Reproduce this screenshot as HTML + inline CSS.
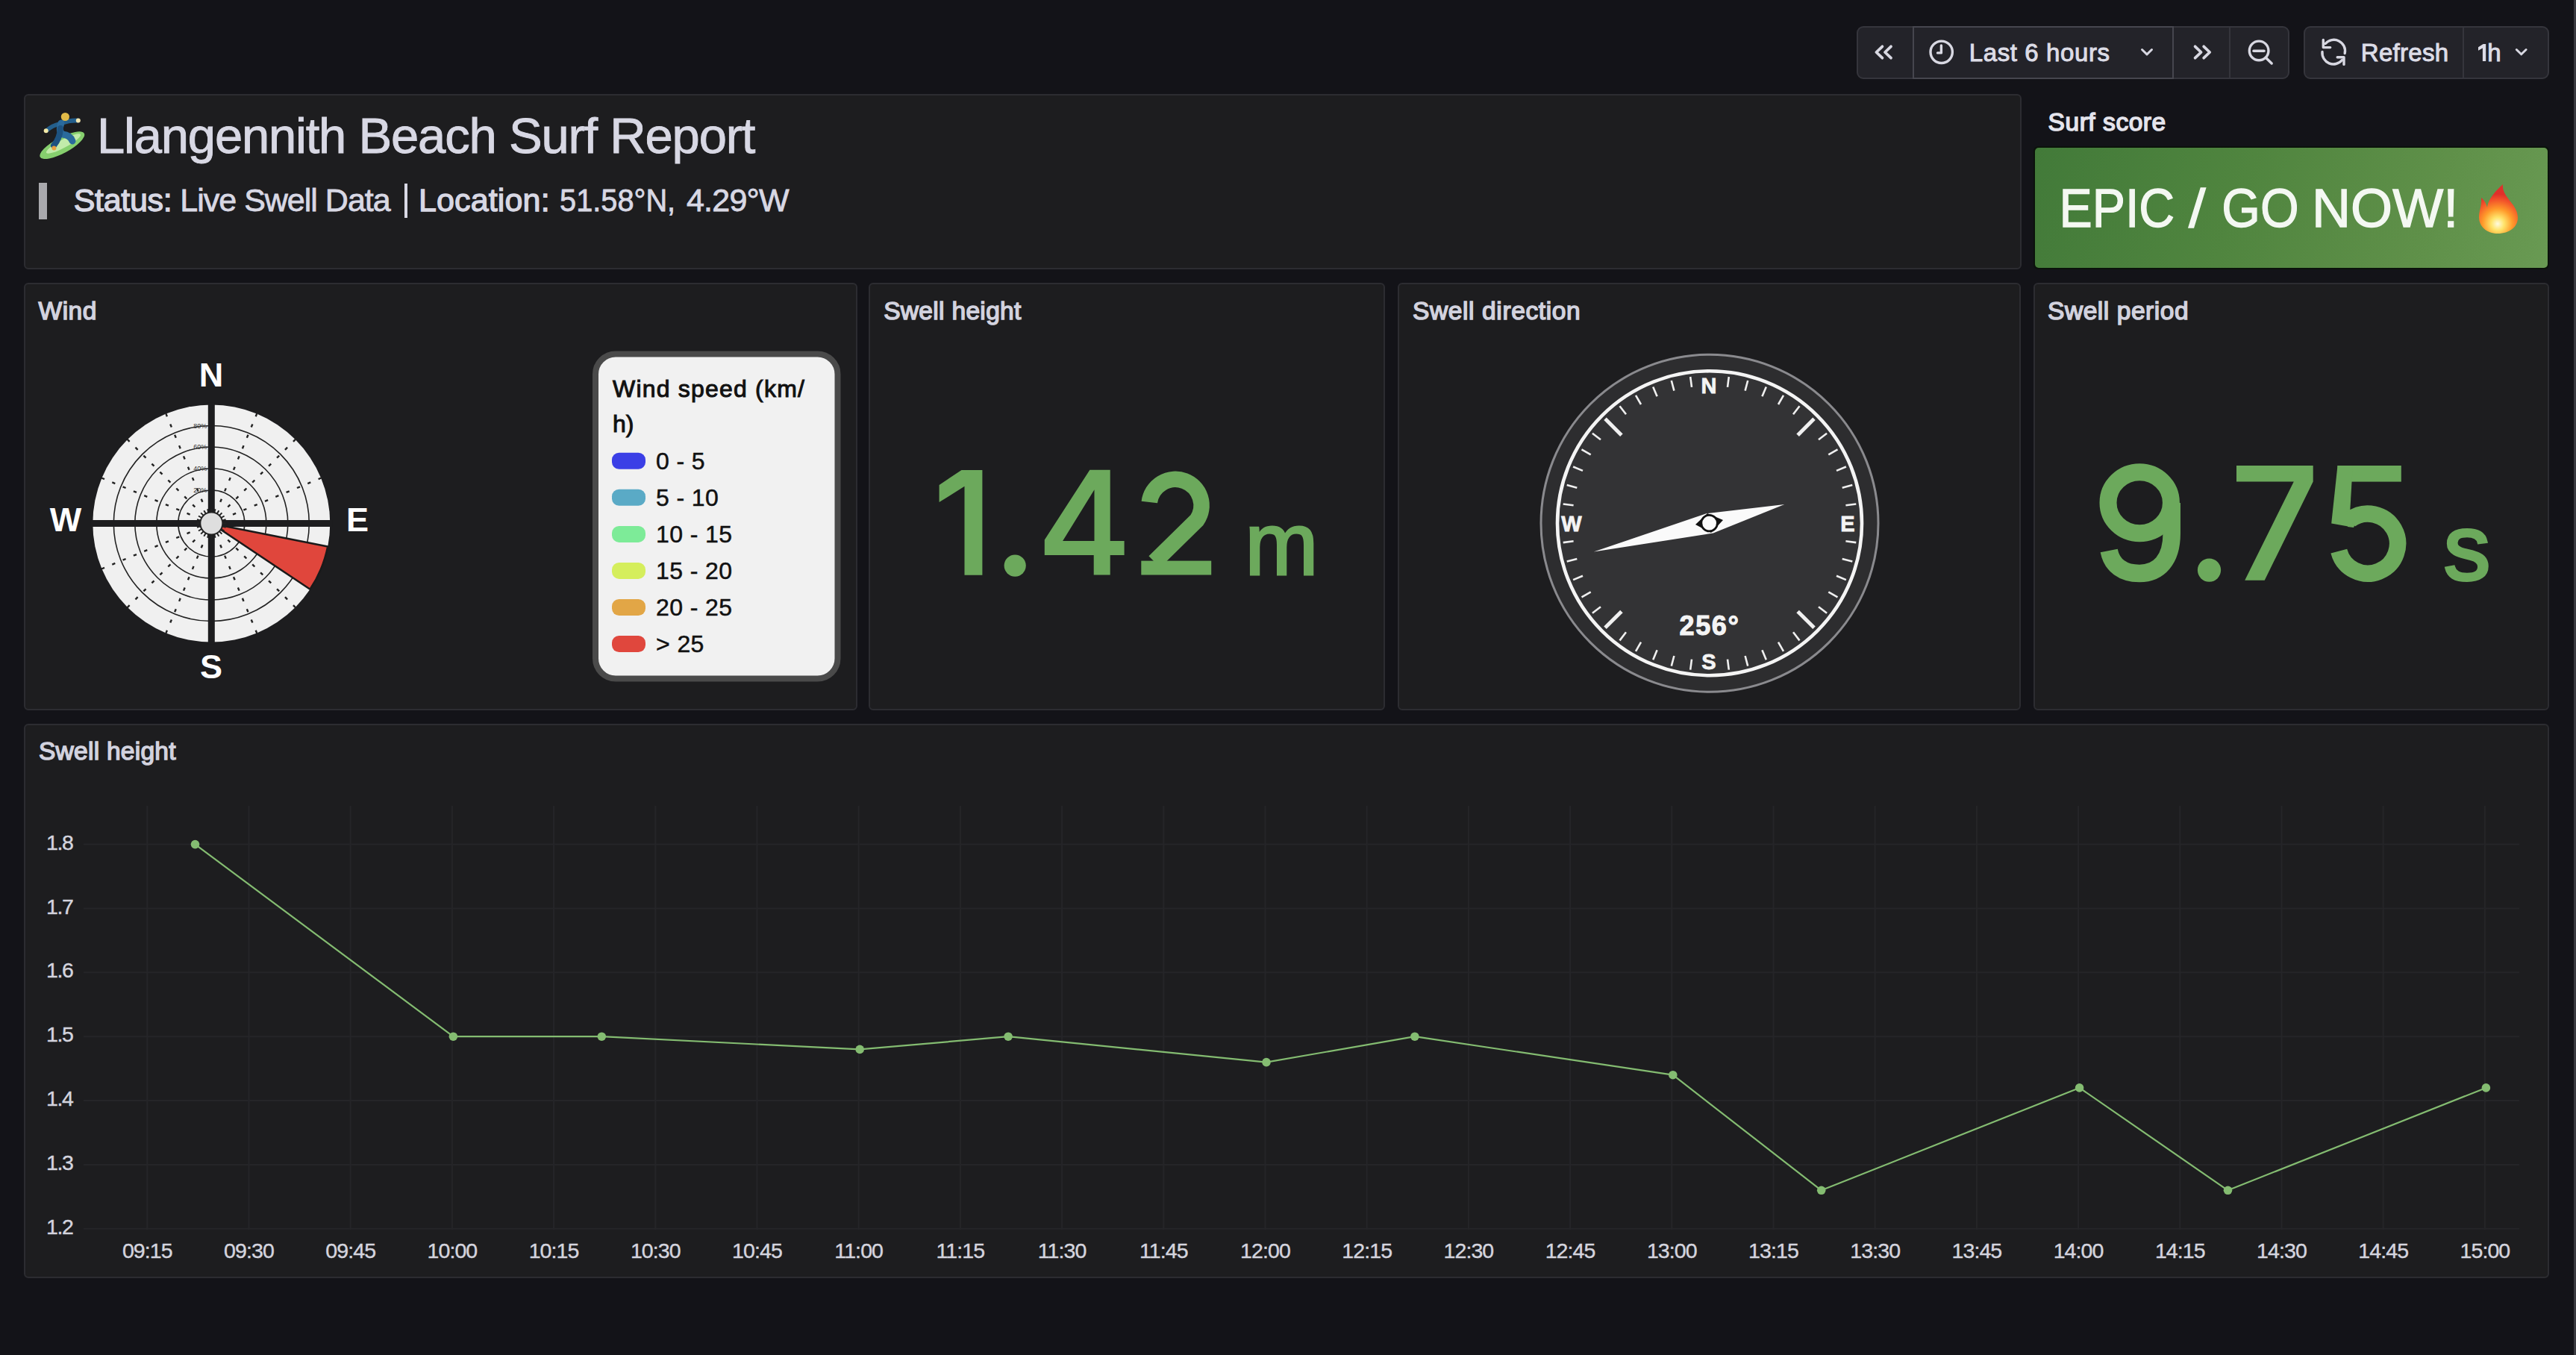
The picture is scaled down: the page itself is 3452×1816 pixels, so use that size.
<!DOCTYPE html>
<html><head><meta charset="utf-8"><title>Llangennith Beach Surf Report</title>
<style>
html,body{margin:0;padding:0;}
body{width:3452px;height:1816px;background:#131318;position:relative;overflow:hidden;font-family:"Liberation Sans",sans-serif;}
.p{position:absolute;box-sizing:border-box;}
.t{position:absolute;white-space:nowrap;line-height:1;}
svg text{font-family:"Liberation Sans",sans-serif;}
</style></head><body>
<div class="p" style="left:2488px;top:35px;width:580px;height:71px;background:#232329;border:2px solid #35353c;border-radius:9px"></div>
<div class="p" style="left:2563px;top:35px;width:350px;height:71px;border:2px solid #46464e;border-radius:0"></div>
<div class="p" style="left:2987px;top:35px;width:2px;height:71px;background:#35353c"></div>
<div class="p" style="left:3087px;top:35px;width:329px;height:71px;background:#232329;border:2px solid #35353c;border-radius:9px"></div>
<div class="p" style="left:3300px;top:35px;width:2px;height:71px;background:#35353c"></div>
<svg class="p" style="left:2480px;top:30px" width="940" height="80" viewBox="2480 30 940 80"><polyline points="2522.4,62.3 2514.4,70 2522.4,77.7" fill="none" stroke="#d8d8e2" stroke-linecap="round" stroke-linejoin="round" stroke-width="3.8"/><polyline points="2534,62.3 2526,70 2534,77.7" fill="none" stroke="#d8d8e2" stroke-linecap="round" stroke-linejoin="round" stroke-width="3.8"/><circle cx="2601.7" cy="69.8" r="14.7" fill="none" stroke="#d8d8e2" stroke-linecap="round" stroke-linejoin="round" stroke-width="3.4"/><polyline points="2601.4,61 2601.4,70.9 2596.5,70.9" fill="none" stroke="#d8d8e2" stroke-linecap="round" stroke-linejoin="round" stroke-width="3.4"/><polyline points="2870.5,66.5 2877,72.8 2883.5,66.5" fill="none" stroke="#d8d8e2" stroke-linecap="round" stroke-linejoin="round" stroke-width="3"/><polyline points="2941.6,62.3 2949.6,70 2941.6,77.7" fill="none" stroke="#d8d8e2" stroke-linecap="round" stroke-linejoin="round" stroke-width="3.8"/><polyline points="2953.2,62.3 2961.2,70 2953.2,77.7" fill="none" stroke="#d8d8e2" stroke-linecap="round" stroke-linejoin="round" stroke-width="3.8"/><circle cx="3027.1" cy="67.9" r="12.8" fill="none" stroke="#d8d8e2" stroke-linecap="round" stroke-linejoin="round" stroke-width="3.4"/><line x1="3020" y1="68.2" x2="3034" y2="68.2" fill="none" stroke="#d8d8e2" stroke-linecap="round" stroke-linejoin="round" stroke-width="3.4"/><line x1="3037.3" y1="78.2" x2="3044.2" y2="85" fill="none" stroke="#d8d8e2" stroke-linecap="round" stroke-linejoin="round" stroke-width="3.4"/><path d="M3116.2,58.5 A15,15 0 0 1 3142.2,71.5" fill="none" stroke="#d8d8e2" stroke-linecap="round" stroke-linejoin="round" stroke-width="3.4"/><path d="M3112,69.5 A15,15 0 0 0 3138.5,80.5" fill="none" stroke="#d8d8e2" stroke-linecap="round" stroke-linejoin="round" stroke-width="3.4"/><polyline points="3113.3,53.5 3113.3,63.6 3122.7,63.6" fill="none" stroke="#d8d8e2" stroke-linecap="round" stroke-linejoin="round" stroke-width="3.4"/><polyline points="3132.2,76.8 3141,76.8 3141,86.4" fill="none" stroke="#d8d8e2" stroke-linecap="round" stroke-linejoin="round" stroke-width="3.4"/><polyline points="3372.3,66.5 3378.7,72.8 3385.1,66.5" fill="none" stroke="#d8d8e2" stroke-linecap="round" stroke-linejoin="round" stroke-width="3"/></svg>
<div class="t" style="left:2638.8px;top:53.8px;font-size:33px;color:#dcdce6;font-weight:normal;letter-spacing:0.60px;-webkit-text-stroke:1px #dcdce6">Last 6 hours</div>
<div class="t" style="left:3163.8px;top:53.6px;font-size:33px;color:#dcdce6;font-weight:normal;letter-spacing:0.30px;-webkit-text-stroke:1px #dcdce6">Refresh</div>
<svg class="p" style="left:3315px;top:55px" width="20" height="30" viewBox="3315 55 20 30"><polygon points="3321,63.2 3327.6,58.9 3331.2,58.9 3331.2,82 3326.9,82 3326.9,64.6 3321,67.8" fill="#dcdce6"/></svg>
<div class="t" style="left:3333.3px;top:54.1px;font-size:33px;color:#dcdce6;font-weight:normal;letter-spacing:0.00px;-webkit-text-stroke:1px #dcdce6">h</div>
<div class="p" style="left:3449px;top:0;width:3px;height:1816px;background:#3a3a40"></div>
<div class="p" style="left:32px;top:126px;width:2677px;height:235px;background:#1d1d1f;border:2px solid #2c2c31;border-radius:6px"></div>
<svg class="p" style="left:44px;top:138px" width="76" height="80" viewBox="44 138 76 80"><ellipse cx="83.3" cy="194.7" rx="33.5" ry="10.5" transform="rotate(-28.2 83.3 194.7)" fill="#86cf6e"/><ellipse cx="85" cy="192.5" rx="26" ry="5.5" transform="rotate(-28.2 85 192.5)" fill="#c2ebaa"/><path d="M82 165 Q94 161 103 161.5" fill="none" stroke="#245f8c" stroke-width="6" stroke-linecap="round"/><path d="M80 166 Q70 168 62.5 175" fill="none" stroke="#245f8c" stroke-width="5.5" stroke-linecap="round"/><path d="M82 165 Q78 176 84 180 Q94 181 97 189" fill="none" stroke="#2a6a9c" stroke-width="9" stroke-linecap="round" stroke-linejoin="round"/><path d="M81 172 Q80 186 72 195" fill="none" stroke="#1d5280" stroke-width="8" stroke-linecap="round"/><circle cx="87.4" cy="156.5" r="5.6" fill="#e2bb48"/><circle cx="104.8" cy="161.6" r="3" fill="#f3e6b0"/><circle cx="61.7" cy="175.2" r="3" fill="#f3eaa8"/><circle cx="72.4" cy="198.5" r="3" fill="#e8a040"/></svg>
<div class="t" style="left:130.0px;top:147.6px;font-size:67px;color:#d8d8e4;font-weight:normal;letter-spacing:-1.21px;-webkit-text-stroke:0.9px #d8d8e4">Llangennith Beach Surf Report</div>
<div class="p" style="left:52px;top:245px;width:11px;height:49px;background:#a9a9ad"></div>
<div class="t" style="left:98.7px;top:246.7px;font-size:43px;color:#d8d8e4;font-weight:normal;letter-spacing:-0.30px;-webkit-text-stroke:1.3px #d8d8e4">Status:</div>
<div class="t" style="left:241.3px;top:246.7px;font-size:43px;color:#d8d8e4;font-weight:normal;letter-spacing:-1.00px;-webkit-text-stroke:0.8px #d8d8e4">Live Swell Data</div>
<div class="p" style="left:541.5px;top:246px;width:4.5px;height:46px;background:#d8d8e4"></div>
<div class="t" style="left:560.9px;top:246.7px;font-size:43px;color:#d8d8e4;font-weight:normal;letter-spacing:0.15px;-webkit-text-stroke:1.3px #d8d8e4">Location:</div>
<div class="t" style="left:750.2px;top:246.7px;font-size:43px;transform-origin:1px 0;transform:scaleX(0.9240);color:#d8d8e4;font-weight:normal;-webkit-text-stroke:0.8px #d8d8e4">51.58°N,</div>
<div class="t" style="left:920.0px;top:246.7px;font-size:43px;color:#d8d8e4;font-weight:normal;letter-spacing:-0.80px;-webkit-text-stroke:0.8px #d8d8e4">4.29°W</div>
<div class="t" style="left:2744.6px;top:146.8px;font-size:33.5px;color:#e4e4ec;font-weight:normal;letter-spacing:0.55px;-webkit-text-stroke:1.5px #e4e4ec">Surf score</div>
<div class="p" style="left:2725px;top:196px;width:691px;height:165px;background:#0b120b;border-radius:6px"></div>
<div class="p" style="left:2727px;top:198px;width:687px;height:161px;border-radius:5px;background:linear-gradient(110deg,#427a39 0%,#50853f 40%,#5f9049 75%,#699a53 100%)"></div>
<div class="t" style="left:2758.8px;top:242.0px;font-size:73px;transform-origin:5px 0;transform:scaleX(0.9080);color:#f4f8f2;font-weight:normal;-webkit-text-stroke:1.3px #f4f8f2">EPIC</div>
<div class="t" style="left:2933.3px;top:242.0px;font-size:73px;transform-origin:0px 0;transform:scaleX(1.1143);color:#f4f8f2;font-weight:normal;-webkit-text-stroke:1.3px #f4f8f2">/</div>
<div class="t" style="left:2977.0px;top:242.0px;font-size:73px;transform-origin:3px 0;transform:scaleX(0.9092);color:#f4f8f2;font-weight:normal;-webkit-text-stroke:1.3px #f4f8f2">GO</div>
<div class="t" style="left:3098.0px;top:242.0px;font-size:73px;transform-origin:5px 0;transform:scaleX(0.9872);color:#f4f8f2;font-weight:normal;-webkit-text-stroke:1.3px #f4f8f2">NOW!</div>
<svg class="p" style="left:3318px;top:244px" width="58" height="71" viewBox="-2 -2 58 71"><defs><radialGradient id="fg" cx="27" cy="54" r="40" gradientUnits="userSpaceOnUse"><stop offset="0" stop-color="#fffbe0"/><stop offset="0.22" stop-color="#ffe36a"/><stop offset="0.5" stop-color="#ff9a2a"/><stop offset="0.8" stop-color="#f2542a"/><stop offset="1" stop-color="#e0302a"/></radialGradient></defs><path d="M27,67 C12,67 2,57 2,45 C2,36 6,30 5,19 C10,23 12,28 13,32 C14,22 22,12 34,1 C33,10 38,16 44,24 C50,31 54,38 54,46 C54,58 43,67 27,67 Z" fill="url(#fg)"/></svg>
<div class="p" style="left:32px;top:379px;width:1117px;height:573px;background:#1d1d1f;border:2px solid #2c2c31;border-radius:6px"></div>
<div class="p" style="left:1164px;top:379px;width:692px;height:573px;background:#1d1d1f;border:2px solid #2c2c31;border-radius:6px"></div>
<div class="p" style="left:1873px;top:379px;width:835px;height:573px;background:#1d1d1f;border:2px solid #2c2c31;border-radius:6px"></div>
<div class="p" style="left:2725px;top:379px;width:691px;height:573px;background:#1d1d1f;border:2px solid #2c2c31;border-radius:6px"></div>
<div class="t" style="left:51.6px;top:399.6px;font-size:33.5px;color:#d2d2de;font-weight:normal;letter-spacing:0.47px;-webkit-text-stroke:1.5px #d2d2de">Wind</div>
<div class="t" style="left:1184.2px;top:399.6px;font-size:33.5px;color:#d2d2de;font-weight:normal;letter-spacing:0.32px;-webkit-text-stroke:1.5px #d2d2de">Swell height</div>
<div class="t" style="left:1893.0px;top:399.6px;font-size:33.5px;color:#d2d2de;font-weight:normal;letter-spacing:0.62px;-webkit-text-stroke:1.5px #d2d2de">Swell direction</div>
<div class="t" style="left:2744.0px;top:399.6px;font-size:33.5px;color:#d2d2de;font-weight:normal;letter-spacing:0.56px;-webkit-text-stroke:1.5px #d2d2de">Swell period</div>
<svg class="p" style="left:1164px;top:379px" width="692" height="573" viewBox="1164 379 692 573"><g fill="#6ca95c"><polygon points="1258.6,649.9 1288.5,630 1316.4,630 1316.4,770.7 1292.5,770.7 1292.5,651.8 1258.6,673.1"/><circle cx="1360.2" cy="758.1" r="14.6"/><path fill-rule="evenodd" d="M1460.4,629.7 L1487.7,629.7 L1487.7,725.1 L1506.6,725.1 L1506.6,744 L1487.7,744 L1487.7,770.5 L1465.7,770.5 L1465.7,744 L1399.8,744 L1399.8,723.5 Z M1424.1,725.1 L1466.5,725.1 L1466.5,656.2 Z"/><rect x="1529.3" y="751.6" width="93.9" height="18.9"/></g><path d="M1540.3,673 A35,35 0 1 1 1604,697 L1547,753" fill="none" stroke="#6ca95c" stroke-width="21.6"/></svg>
<div class="t" style="left:1668.2px;top:670.0px;font-size:118px;color:#6ca95c;font-weight:normal;letter-spacing:1.00px;-webkit-text-stroke:3px #6ca95c">m</div>
<svg class="p" style="left:2725px;top:379px" width="691" height="573" viewBox="2725 379 691 573"><g fill="#6ca95c"><polygon points="2997,624 3099.7,624 3099.7,645.6 3034.7,777.7 3008.2,777.7 3073.8,645.6 2997,645.6"/><circle cx="2960.5" cy="764.1" r="15.6"/><rect x="3132.5" y="624" width="85.3" height="21.6"/><polygon points="3132.5,624 3152.8,624 3148,705.7 3124.2,701.5"/><polygon points="3147,682 3162,688 3154,707 3146,706"/></g><ellipse cx="2867.2" cy="673.8" rx="42.2" ry="41" fill="none" stroke="#6ca95c" stroke-width="23"/><path d="M2910.2,674 L2910.2,715 C2910.2,750 2893,768.5 2867,768.5 C2845,768.5 2830,758 2826.2,738" fill="none" stroke="#6ca95c" stroke-width="23.5"/><path d="M3149.2,696.5 A40,40 0 1 1 3134.3,738.6" fill="none" stroke="#6ca95c" stroke-width="22.5"/></svg>
<div class="t" style="left:3274.8px;top:671.0px;font-size:125px;color:#6ca95c;font-weight:normal;letter-spacing:-0.50px;-webkit-text-stroke:4px #6ca95c">s</div>
<svg class="p" style="left:0;top:0" width="1160" height="960" viewBox="0 0 1160 960"><circle cx="283.3" cy="701.5" r="159" fill="#f0f0f0"/><circle cx="283.3" cy="701.5" r="44.5" fill="none" stroke="#222" stroke-width="1.6"/><circle cx="283.3" cy="701.5" r="73.5" fill="none" stroke="#222" stroke-width="1.6"/><circle cx="283.3" cy="701.5" r="102.5" fill="none" stroke="#222" stroke-width="1.6"/><circle cx="283.3" cy="701.5" r="131" fill="none" stroke="#222" stroke-width="1.6"/><line x1="295.2" y1="672.8" x2="296.9" y2="668.7" stroke="#222" stroke-width="2.4"/><line x1="301.1" y1="658.4" x2="302.8" y2="654.4" stroke="#222" stroke-width="2.4"/><line x1="307.1" y1="644.1" x2="308.7" y2="640.1" stroke="#222" stroke-width="2.4"/><line x1="313.0" y1="629.8" x2="314.7" y2="625.7" stroke="#222" stroke-width="2.4"/><line x1="318.9" y1="615.5" x2="320.6" y2="611.4" stroke="#222" stroke-width="2.4"/><line x1="324.9" y1="601.2" x2="326.5" y2="597.1" stroke="#222" stroke-width="2.4"/><line x1="330.8" y1="586.8" x2="332.5" y2="582.8" stroke="#222" stroke-width="2.4"/><line x1="336.7" y1="572.5" x2="338.4" y2="568.5" stroke="#222" stroke-width="2.4"/><line x1="342.7" y1="558.2" x2="344.3" y2="554.1" stroke="#222" stroke-width="2.4"/><line x1="305.3" y1="679.5" x2="308.4" y2="676.4" stroke="#222" stroke-width="2.4"/><line x1="316.3" y1="668.5" x2="319.4" y2="665.4" stroke="#222" stroke-width="2.4"/><line x1="327.2" y1="657.6" x2="330.3" y2="654.5" stroke="#222" stroke-width="2.4"/><line x1="338.2" y1="646.6" x2="341.3" y2="643.5" stroke="#222" stroke-width="2.4"/><line x1="349.1" y1="635.7" x2="352.2" y2="632.6" stroke="#222" stroke-width="2.4"/><line x1="360.1" y1="624.7" x2="363.2" y2="621.6" stroke="#222" stroke-width="2.4"/><line x1="371.1" y1="613.7" x2="374.2" y2="610.6" stroke="#222" stroke-width="2.4"/><line x1="382.0" y1="602.8" x2="385.1" y2="599.7" stroke="#222" stroke-width="2.4"/><line x1="393.0" y1="591.8" x2="396.1" y2="588.7" stroke="#222" stroke-width="2.4"/><line x1="312.0" y1="689.6" x2="316.1" y2="687.9" stroke="#222" stroke-width="2.4"/><line x1="326.4" y1="683.7" x2="330.4" y2="682.0" stroke="#222" stroke-width="2.4"/><line x1="340.7" y1="677.7" x2="344.7" y2="676.1" stroke="#222" stroke-width="2.4"/><line x1="355.0" y1="671.8" x2="359.1" y2="670.1" stroke="#222" stroke-width="2.4"/><line x1="369.3" y1="665.9" x2="373.4" y2="664.2" stroke="#222" stroke-width="2.4"/><line x1="383.6" y1="659.9" x2="387.7" y2="658.3" stroke="#222" stroke-width="2.4"/><line x1="398.0" y1="654.0" x2="402.0" y2="652.3" stroke="#222" stroke-width="2.4"/><line x1="412.3" y1="648.1" x2="416.3" y2="646.4" stroke="#222" stroke-width="2.4"/><line x1="426.6" y1="642.1" x2="430.7" y2="640.5" stroke="#222" stroke-width="2.4"/><line x1="312.0" y1="713.4" x2="316.1" y2="715.1" stroke="#222" stroke-width="2.4"/><line x1="326.4" y1="719.3" x2="330.4" y2="721.0" stroke="#222" stroke-width="2.4"/><line x1="340.7" y1="725.3" x2="344.7" y2="726.9" stroke="#222" stroke-width="2.4"/><line x1="355.0" y1="731.2" x2="359.1" y2="732.9" stroke="#222" stroke-width="2.4"/><line x1="369.3" y1="737.1" x2="373.4" y2="738.8" stroke="#222" stroke-width="2.4"/><line x1="383.6" y1="743.1" x2="387.7" y2="744.7" stroke="#222" stroke-width="2.4"/><line x1="398.0" y1="749.0" x2="402.0" y2="750.7" stroke="#222" stroke-width="2.4"/><line x1="412.3" y1="754.9" x2="416.3" y2="756.6" stroke="#222" stroke-width="2.4"/><line x1="426.6" y1="760.9" x2="430.7" y2="762.5" stroke="#222" stroke-width="2.4"/><line x1="305.3" y1="723.5" x2="308.4" y2="726.6" stroke="#222" stroke-width="2.4"/><line x1="316.3" y1="734.5" x2="319.4" y2="737.6" stroke="#222" stroke-width="2.4"/><line x1="327.2" y1="745.4" x2="330.3" y2="748.5" stroke="#222" stroke-width="2.4"/><line x1="338.2" y1="756.4" x2="341.3" y2="759.5" stroke="#222" stroke-width="2.4"/><line x1="349.1" y1="767.3" x2="352.2" y2="770.4" stroke="#222" stroke-width="2.4"/><line x1="360.1" y1="778.3" x2="363.2" y2="781.4" stroke="#222" stroke-width="2.4"/><line x1="371.1" y1="789.3" x2="374.2" y2="792.4" stroke="#222" stroke-width="2.4"/><line x1="382.0" y1="800.2" x2="385.1" y2="803.3" stroke="#222" stroke-width="2.4"/><line x1="393.0" y1="811.2" x2="396.1" y2="814.3" stroke="#222" stroke-width="2.4"/><line x1="295.2" y1="730.2" x2="296.9" y2="734.3" stroke="#222" stroke-width="2.4"/><line x1="301.1" y1="744.6" x2="302.8" y2="748.6" stroke="#222" stroke-width="2.4"/><line x1="307.1" y1="758.9" x2="308.7" y2="762.9" stroke="#222" stroke-width="2.4"/><line x1="313.0" y1="773.2" x2="314.7" y2="777.3" stroke="#222" stroke-width="2.4"/><line x1="318.9" y1="787.5" x2="320.6" y2="791.6" stroke="#222" stroke-width="2.4"/><line x1="324.9" y1="801.8" x2="326.5" y2="805.9" stroke="#222" stroke-width="2.4"/><line x1="330.8" y1="816.2" x2="332.5" y2="820.2" stroke="#222" stroke-width="2.4"/><line x1="336.7" y1="830.5" x2="338.4" y2="834.5" stroke="#222" stroke-width="2.4"/><line x1="342.7" y1="844.8" x2="344.3" y2="848.9" stroke="#222" stroke-width="2.4"/><line x1="271.4" y1="730.2" x2="269.7" y2="734.3" stroke="#222" stroke-width="2.4"/><line x1="265.5" y1="744.6" x2="263.8" y2="748.6" stroke="#222" stroke-width="2.4"/><line x1="259.5" y1="758.9" x2="257.9" y2="762.9" stroke="#222" stroke-width="2.4"/><line x1="253.6" y1="773.2" x2="251.9" y2="777.3" stroke="#222" stroke-width="2.4"/><line x1="247.7" y1="787.5" x2="246.0" y2="791.6" stroke="#222" stroke-width="2.4"/><line x1="241.7" y1="801.8" x2="240.1" y2="805.9" stroke="#222" stroke-width="2.4"/><line x1="235.8" y1="816.2" x2="234.1" y2="820.2" stroke="#222" stroke-width="2.4"/><line x1="229.9" y1="830.5" x2="228.2" y2="834.5" stroke="#222" stroke-width="2.4"/><line x1="223.9" y1="844.8" x2="222.3" y2="848.9" stroke="#222" stroke-width="2.4"/><line x1="261.3" y1="723.5" x2="258.2" y2="726.6" stroke="#222" stroke-width="2.4"/><line x1="250.3" y1="734.5" x2="247.2" y2="737.6" stroke="#222" stroke-width="2.4"/><line x1="239.4" y1="745.4" x2="236.3" y2="748.5" stroke="#222" stroke-width="2.4"/><line x1="228.4" y1="756.4" x2="225.3" y2="759.5" stroke="#222" stroke-width="2.4"/><line x1="217.5" y1="767.3" x2="214.4" y2="770.4" stroke="#222" stroke-width="2.4"/><line x1="206.5" y1="778.3" x2="203.4" y2="781.4" stroke="#222" stroke-width="2.4"/><line x1="195.5" y1="789.3" x2="192.4" y2="792.4" stroke="#222" stroke-width="2.4"/><line x1="184.6" y1="800.2" x2="181.5" y2="803.3" stroke="#222" stroke-width="2.4"/><line x1="173.6" y1="811.2" x2="170.5" y2="814.3" stroke="#222" stroke-width="2.4"/><line x1="254.6" y1="713.4" x2="250.5" y2="715.1" stroke="#222" stroke-width="2.4"/><line x1="240.2" y1="719.3" x2="236.2" y2="721.0" stroke="#222" stroke-width="2.4"/><line x1="225.9" y1="725.3" x2="221.9" y2="726.9" stroke="#222" stroke-width="2.4"/><line x1="211.6" y1="731.2" x2="207.5" y2="732.9" stroke="#222" stroke-width="2.4"/><line x1="197.3" y1="737.1" x2="193.2" y2="738.8" stroke="#222" stroke-width="2.4"/><line x1="183.0" y1="743.1" x2="178.9" y2="744.7" stroke="#222" stroke-width="2.4"/><line x1="168.6" y1="749.0" x2="164.6" y2="750.7" stroke="#222" stroke-width="2.4"/><line x1="154.3" y1="754.9" x2="150.3" y2="756.6" stroke="#222" stroke-width="2.4"/><line x1="140.0" y1="760.9" x2="135.9" y2="762.5" stroke="#222" stroke-width="2.4"/><line x1="254.6" y1="689.6" x2="250.5" y2="687.9" stroke="#222" stroke-width="2.4"/><line x1="240.2" y1="683.7" x2="236.2" y2="682.0" stroke="#222" stroke-width="2.4"/><line x1="225.9" y1="677.7" x2="221.9" y2="676.1" stroke="#222" stroke-width="2.4"/><line x1="211.6" y1="671.8" x2="207.5" y2="670.1" stroke="#222" stroke-width="2.4"/><line x1="197.3" y1="665.9" x2="193.2" y2="664.2" stroke="#222" stroke-width="2.4"/><line x1="183.0" y1="659.9" x2="178.9" y2="658.3" stroke="#222" stroke-width="2.4"/><line x1="168.6" y1="654.0" x2="164.6" y2="652.3" stroke="#222" stroke-width="2.4"/><line x1="154.3" y1="648.1" x2="150.3" y2="646.4" stroke="#222" stroke-width="2.4"/><line x1="140.0" y1="642.1" x2="135.9" y2="640.5" stroke="#222" stroke-width="2.4"/><line x1="261.3" y1="679.5" x2="258.2" y2="676.4" stroke="#222" stroke-width="2.4"/><line x1="250.3" y1="668.5" x2="247.2" y2="665.4" stroke="#222" stroke-width="2.4"/><line x1="239.4" y1="657.6" x2="236.3" y2="654.5" stroke="#222" stroke-width="2.4"/><line x1="228.4" y1="646.6" x2="225.3" y2="643.5" stroke="#222" stroke-width="2.4"/><line x1="217.5" y1="635.7" x2="214.4" y2="632.6" stroke="#222" stroke-width="2.4"/><line x1="206.5" y1="624.7" x2="203.4" y2="621.6" stroke="#222" stroke-width="2.4"/><line x1="195.5" y1="613.7" x2="192.4" y2="610.6" stroke="#222" stroke-width="2.4"/><line x1="184.6" y1="602.8" x2="181.5" y2="599.7" stroke="#222" stroke-width="2.4"/><line x1="173.6" y1="591.8" x2="170.5" y2="588.7" stroke="#222" stroke-width="2.4"/><line x1="271.4" y1="672.8" x2="269.7" y2="668.7" stroke="#222" stroke-width="2.4"/><line x1="265.5" y1="658.4" x2="263.8" y2="654.4" stroke="#222" stroke-width="2.4"/><line x1="259.5" y1="644.1" x2="257.9" y2="640.1" stroke="#222" stroke-width="2.4"/><line x1="253.6" y1="629.8" x2="251.9" y2="625.7" stroke="#222" stroke-width="2.4"/><line x1="247.7" y1="615.5" x2="246.0" y2="611.4" stroke="#222" stroke-width="2.4"/><line x1="241.7" y1="601.2" x2="240.1" y2="597.1" stroke="#222" stroke-width="2.4"/><line x1="235.8" y1="586.8" x2="234.1" y2="582.8" stroke="#222" stroke-width="2.4"/><line x1="229.9" y1="572.5" x2="228.2" y2="568.5" stroke="#222" stroke-width="2.4"/><line x1="223.9" y1="558.2" x2="222.3" y2="554.1" stroke="#222" stroke-width="2.4"/><text x="277.3" y="573.5" font-size="9" text-anchor="end" fill="#333" font-family="Liberation Sans">80%</text><text x="277.3" y="602.0" font-size="9" text-anchor="end" fill="#333" font-family="Liberation Sans">60%</text><text x="277.3" y="631.0" font-size="9" text-anchor="end" fill="#333" font-family="Liberation Sans">40%</text><text x="277.3" y="660.0" font-size="9" text-anchor="end" fill="#333" font-family="Liberation Sans">20%</text><path d="M298.0 704.4 L439.2 732.5 A159 159 0 0 1 415.5 789.8 L295.8 709.8 Z" fill="#e0463c" stroke="#1a1a1a" stroke-width="2.5" stroke-linejoin="round"/><rect x="278.8" y="539.5" width="9" height="324" fill="#1d1d1f"/><rect x="121.30000000000001" y="697.0" width="324" height="9" fill="#1d1d1f"/><line x1="283.3" y1="686.5" x2="283.3" y2="681.5" stroke="#222" stroke-width="2"/><line x1="287.2" y1="687.0" x2="288.5" y2="682.2" stroke="#222" stroke-width="2"/><line x1="290.8" y1="688.5" x2="293.3" y2="684.2" stroke="#222" stroke-width="2"/><line x1="293.9" y1="690.9" x2="297.4" y2="687.4" stroke="#222" stroke-width="2"/><line x1="296.3" y1="694.0" x2="300.6" y2="691.5" stroke="#222" stroke-width="2"/><line x1="297.8" y1="697.6" x2="302.6" y2="696.3" stroke="#222" stroke-width="2"/><line x1="298.3" y1="701.5" x2="303.3" y2="701.5" stroke="#222" stroke-width="2"/><line x1="297.8" y1="705.4" x2="302.6" y2="706.7" stroke="#222" stroke-width="2"/><line x1="296.3" y1="709.0" x2="300.6" y2="711.5" stroke="#222" stroke-width="2"/><line x1="293.9" y1="712.1" x2="297.4" y2="715.6" stroke="#222" stroke-width="2"/><line x1="290.8" y1="714.5" x2="293.3" y2="718.8" stroke="#222" stroke-width="2"/><line x1="287.2" y1="716.0" x2="288.5" y2="720.8" stroke="#222" stroke-width="2"/><line x1="283.3" y1="716.5" x2="283.3" y2="721.5" stroke="#222" stroke-width="2"/><line x1="279.4" y1="716.0" x2="278.1" y2="720.8" stroke="#222" stroke-width="2"/><line x1="275.8" y1="714.5" x2="273.3" y2="718.8" stroke="#222" stroke-width="2"/><line x1="272.7" y1="712.1" x2="269.2" y2="715.6" stroke="#222" stroke-width="2"/><line x1="270.3" y1="709.0" x2="266.0" y2="711.5" stroke="#222" stroke-width="2"/><line x1="268.8" y1="705.4" x2="264.0" y2="706.7" stroke="#222" stroke-width="2"/><line x1="268.3" y1="701.5" x2="263.3" y2="701.5" stroke="#222" stroke-width="2"/><line x1="268.8" y1="697.6" x2="264.0" y2="696.3" stroke="#222" stroke-width="2"/><line x1="270.3" y1="694.0" x2="266.0" y2="691.5" stroke="#222" stroke-width="2"/><line x1="272.7" y1="690.9" x2="269.2" y2="687.4" stroke="#222" stroke-width="2"/><line x1="275.8" y1="688.5" x2="273.3" y2="684.2" stroke="#222" stroke-width="2"/><line x1="279.4" y1="687.0" x2="278.1" y2="682.2" stroke="#222" stroke-width="2"/><circle cx="283.3" cy="701.5" r="15" fill="#dedede" stroke="#222" stroke-width="2"/><text x="283" y="518" font-size="45" font-weight="bold" text-anchor="middle" fill="#fff" font-family="Liberation Sans">N</text><text x="283" y="909" font-size="45" font-weight="bold" text-anchor="middle" fill="#fff" font-family="Liberation Sans">S</text><text x="88" y="712" font-size="45" font-weight="bold" text-anchor="middle" fill="#fff" font-family="Liberation Sans">W</text><text x="479" y="712" font-size="45" font-weight="bold" text-anchor="middle" fill="#fff" font-family="Liberation Sans">E</text><rect x="798" y="474.5" width="324.5" height="435" rx="27" fill="#f1f1f1" stroke="#4a4a4a" stroke-width="8"/><text x="821" y="532" font-size="32" fill="#111" font-family="Liberation Sans" letter-spacing="1.2" stroke="#111" stroke-width="1">Wind speed (km/</text><text x="821" y="579" font-size="32" fill="#111" font-family="Liberation Sans" stroke="#111" stroke-width="1">h)</text><rect x="820" y="606.8" width="45" height="22" rx="9.5" fill="#3b3fe6"/><text x="879" y="628.8" font-size="32" fill="#111" font-family="Liberation Sans" letter-spacing="0.4" stroke="#111" stroke-width="0.5">0 - 5</text><rect x="820" y="655.8" width="45" height="22" rx="9.5" fill="#5aaac6"/><text x="879" y="677.8" font-size="32" fill="#111" font-family="Liberation Sans" letter-spacing="0.4" stroke="#111" stroke-width="0.5">5 - 10</text><rect x="820" y="704.9" width="45" height="22" rx="9.5" fill="#7deb98"/><text x="879" y="726.9" font-size="32" fill="#111" font-family="Liberation Sans" letter-spacing="0.4" stroke="#111" stroke-width="0.5">10 - 15</text><rect x="820" y="753.9" width="45" height="22" rx="9.5" fill="#d5ee5c"/><text x="879" y="775.9" font-size="32" fill="#111" font-family="Liberation Sans" letter-spacing="0.4" stroke="#111" stroke-width="0.5">15 - 20</text><rect x="820" y="803.0" width="45" height="22" rx="9.5" fill="#e2a646"/><text x="879" y="825.0" font-size="32" fill="#111" font-family="Liberation Sans" letter-spacing="0.4" stroke="#111" stroke-width="0.5">20 - 25</text><rect x="820" y="852.0" width="45" height="22" rx="9.5" fill="#e0473d"/><text x="879" y="874.0" font-size="32" fill="#111" font-family="Liberation Sans" letter-spacing="0.4" stroke="#111" stroke-width="0.5">&gt; 25</text></svg>
<svg class="p" style="left:1873px;top:379px" width="835" height="573" viewBox="1873 379 835 573"><circle cx="2291" cy="701.3" r="226" fill="#2d2d2f" stroke="#8a8a8e" stroke-width="3"/><circle cx="2291" cy="701.3" r="204" fill="#333335" stroke="#f4f4f4" stroke-width="4.6"/><line x1="2315.0" y1="518.9" x2="2316.8" y2="505.0" stroke="#f0f0f0" stroke-width="2.6"/><line x1="2338.6" y1="523.6" x2="2342.2" y2="510.0" stroke="#f0f0f0" stroke-width="2.6"/><line x1="2361.4" y1="531.3" x2="2366.8" y2="518.4" stroke="#f0f0f0" stroke-width="2.6"/><line x1="2383.0" y1="542.0" x2="2390.0" y2="529.8" stroke="#f0f0f0" stroke-width="2.6"/><line x1="2403.0" y1="555.3" x2="2411.5" y2="544.2" stroke="#f0f0f0" stroke-width="2.6"/><line x1="2409.1" y1="583.2" x2="2431.0" y2="561.3" stroke="#f0f0f0" stroke-width="5"/><line x1="2437.0" y1="589.3" x2="2448.1" y2="580.8" stroke="#f0f0f0" stroke-width="2.6"/><line x1="2450.3" y1="609.3" x2="2462.5" y2="602.3" stroke="#f0f0f0" stroke-width="2.6"/><line x1="2461.0" y1="630.9" x2="2473.9" y2="625.5" stroke="#f0f0f0" stroke-width="2.6"/><line x1="2468.7" y1="653.7" x2="2482.3" y2="650.1" stroke="#f0f0f0" stroke-width="2.6"/><line x1="2473.4" y1="677.3" x2="2487.3" y2="675.5" stroke="#f0f0f0" stroke-width="2.6"/><line x1="2473.4" y1="725.3" x2="2487.3" y2="727.1" stroke="#f0f0f0" stroke-width="2.6"/><line x1="2468.7" y1="748.9" x2="2482.3" y2="752.5" stroke="#f0f0f0" stroke-width="2.6"/><line x1="2461.0" y1="771.7" x2="2473.9" y2="777.1" stroke="#f0f0f0" stroke-width="2.6"/><line x1="2450.3" y1="793.3" x2="2462.5" y2="800.3" stroke="#f0f0f0" stroke-width="2.6"/><line x1="2437.0" y1="813.3" x2="2448.1" y2="821.8" stroke="#f0f0f0" stroke-width="2.6"/><line x1="2409.1" y1="819.4" x2="2431.0" y2="841.3" stroke="#f0f0f0" stroke-width="5"/><line x1="2403.0" y1="847.3" x2="2411.5" y2="858.4" stroke="#f0f0f0" stroke-width="2.6"/><line x1="2383.0" y1="860.6" x2="2390.0" y2="872.8" stroke="#f0f0f0" stroke-width="2.6"/><line x1="2361.4" y1="871.3" x2="2366.8" y2="884.2" stroke="#f0f0f0" stroke-width="2.6"/><line x1="2338.6" y1="879.0" x2="2342.2" y2="892.6" stroke="#f0f0f0" stroke-width="2.6"/><line x1="2315.0" y1="883.7" x2="2316.8" y2="897.6" stroke="#f0f0f0" stroke-width="2.6"/><line x1="2267.0" y1="883.7" x2="2265.2" y2="897.6" stroke="#f0f0f0" stroke-width="2.6"/><line x1="2243.4" y1="879.0" x2="2239.8" y2="892.6" stroke="#f0f0f0" stroke-width="2.6"/><line x1="2220.6" y1="871.3" x2="2215.2" y2="884.2" stroke="#f0f0f0" stroke-width="2.6"/><line x1="2199.0" y1="860.6" x2="2192.0" y2="872.8" stroke="#f0f0f0" stroke-width="2.6"/><line x1="2179.0" y1="847.3" x2="2170.5" y2="858.4" stroke="#f0f0f0" stroke-width="2.6"/><line x1="2172.9" y1="819.4" x2="2151.0" y2="841.3" stroke="#f0f0f0" stroke-width="5"/><line x1="2145.0" y1="813.3" x2="2133.9" y2="821.8" stroke="#f0f0f0" stroke-width="2.6"/><line x1="2131.7" y1="793.3" x2="2119.5" y2="800.3" stroke="#f0f0f0" stroke-width="2.6"/><line x1="2121.0" y1="771.7" x2="2108.1" y2="777.1" stroke="#f0f0f0" stroke-width="2.6"/><line x1="2113.3" y1="748.9" x2="2099.7" y2="752.5" stroke="#f0f0f0" stroke-width="2.6"/><line x1="2108.6" y1="725.3" x2="2094.7" y2="727.1" stroke="#f0f0f0" stroke-width="2.6"/><line x1="2108.6" y1="677.3" x2="2094.7" y2="675.5" stroke="#f0f0f0" stroke-width="2.6"/><line x1="2113.3" y1="653.7" x2="2099.7" y2="650.1" stroke="#f0f0f0" stroke-width="2.6"/><line x1="2121.0" y1="630.9" x2="2108.1" y2="625.5" stroke="#f0f0f0" stroke-width="2.6"/><line x1="2131.7" y1="609.3" x2="2119.5" y2="602.3" stroke="#f0f0f0" stroke-width="2.6"/><line x1="2145.0" y1="589.3" x2="2133.9" y2="580.8" stroke="#f0f0f0" stroke-width="2.6"/><line x1="2172.9" y1="583.2" x2="2151.0" y2="561.3" stroke="#f0f0f0" stroke-width="5"/><line x1="2179.0" y1="555.3" x2="2170.5" y2="544.2" stroke="#f0f0f0" stroke-width="2.6"/><line x1="2199.0" y1="542.0" x2="2192.0" y2="529.8" stroke="#f0f0f0" stroke-width="2.6"/><line x1="2220.6" y1="531.3" x2="2215.2" y2="518.4" stroke="#f0f0f0" stroke-width="2.6"/><line x1="2243.4" y1="523.6" x2="2239.8" y2="510.0" stroke="#f0f0f0" stroke-width="2.6"/><line x1="2267.0" y1="518.9" x2="2265.2" y2="505.0" stroke="#f0f0f0" stroke-width="2.6"/><text x="2290" y="527" font-size="29" font-weight="bold" text-anchor="middle" fill="#f4f4f4" stroke="#f4f4f4" stroke-width="0.8" font-family="Liberation Sans">N</text><text x="2290" y="897" font-size="29" font-weight="bold" text-anchor="middle" fill="#f4f4f4" stroke="#f4f4f4" stroke-width="0.8" font-family="Liberation Sans">S</text><text x="2106" y="712" font-size="29" font-weight="bold" text-anchor="middle" fill="#f4f4f4" stroke="#f4f4f4" stroke-width="0.8" font-family="Liberation Sans">W</text><text x="2476" y="712" font-size="29" font-weight="bold" text-anchor="middle" fill="#f4f4f4" stroke="#f4f4f4" stroke-width="0.8" font-family="Liberation Sans">E</text><text x="2291" y="851" font-size="36" font-weight="bold" text-anchor="middle" fill="#f4f4f4" font-family="Liberation Sans" letter-spacing="1.6" stroke="#f4f4f4" stroke-width="1">256°</text><polygon points="2135.7,739.6 2286.5,688.3 2391.3,676.1 2295.8,714.5" fill="#fafafa"/><polygon points="2272,703 2288,688 2309,697 2293,714" fill="#111"/><circle cx="2290.6" cy="701.1" r="10.8" fill="#fafafa" stroke="#111" stroke-width="2.8"/></svg>
<div class="p" style="left:32px;top:970px;width:3384px;height:743px;background:#1d1d1f;border:2px solid #2c2c31;border-radius:6px"></div>
<div class="t" style="left:52.0px;top:990.3px;font-size:33.5px;color:#d2d2de;font-weight:normal;letter-spacing:0.26px;-webkit-text-stroke:1.5px #d2d2de">Swell height</div>
<svg class="p" style="left:0;top:960px" width="3452" height="760" viewBox="0 960 3452 760"><line x1="112" y1="1646.8" x2="3376" y2="1646.8" stroke="#252528" stroke-width="2"/><text x="97.5" y="1653.8" font-size="28.5" text-anchor="end" fill="#d4d4de" font-family="Liberation Sans" letter-spacing="-1.4" stroke="#d4d4de" stroke-width="0.4">1.2</text><line x1="112" y1="1560.9" x2="3376" y2="1560.9" stroke="#252528" stroke-width="2"/><text x="97.5" y="1567.9" font-size="28.5" text-anchor="end" fill="#d4d4de" font-family="Liberation Sans" letter-spacing="-1.4" stroke="#d4d4de" stroke-width="0.4">1.3</text><line x1="112" y1="1475.1" x2="3376" y2="1475.1" stroke="#252528" stroke-width="2"/><text x="97.5" y="1482.1" font-size="28.5" text-anchor="end" fill="#d4d4de" font-family="Liberation Sans" letter-spacing="-1.4" stroke="#d4d4de" stroke-width="0.4">1.4</text><line x1="112" y1="1389.2" x2="3376" y2="1389.2" stroke="#252528" stroke-width="2"/><text x="97.5" y="1396.2" font-size="28.5" text-anchor="end" fill="#d4d4de" font-family="Liberation Sans" letter-spacing="-1.4" stroke="#d4d4de" stroke-width="0.4">1.5</text><line x1="112" y1="1303.3" x2="3376" y2="1303.3" stroke="#252528" stroke-width="2"/><text x="97.5" y="1310.3" font-size="28.5" text-anchor="end" fill="#d4d4de" font-family="Liberation Sans" letter-spacing="-1.4" stroke="#d4d4de" stroke-width="0.4">1.6</text><line x1="112" y1="1217.5" x2="3376" y2="1217.5" stroke="#252528" stroke-width="2"/><text x="97.5" y="1224.5" font-size="28.5" text-anchor="end" fill="#d4d4de" font-family="Liberation Sans" letter-spacing="-1.4" stroke="#d4d4de" stroke-width="0.4">1.7</text><line x1="112" y1="1131.6" x2="3376" y2="1131.6" stroke="#252528" stroke-width="2"/><text x="97.5" y="1138.6" font-size="28.5" text-anchor="end" fill="#d4d4de" font-family="Liberation Sans" letter-spacing="-1.4" stroke="#d4d4de" stroke-width="0.4">1.8</text><line x1="197.3" y1="1080" x2="197.3" y2="1648" stroke="#252528" stroke-width="2"/><text x="197.3" y="1685.7" font-size="28.5" text-anchor="middle" fill="#d4d4de" font-family="Liberation Sans" letter-spacing="-0.9" stroke="#d4d4de" stroke-width="0.4">09:15</text><line x1="333.5" y1="1080" x2="333.5" y2="1648" stroke="#252528" stroke-width="2"/><text x="333.5" y="1685.7" font-size="28.5" text-anchor="middle" fill="#d4d4de" font-family="Liberation Sans" letter-spacing="-0.9" stroke="#d4d4de" stroke-width="0.4">09:30</text><line x1="469.7" y1="1080" x2="469.7" y2="1648" stroke="#252528" stroke-width="2"/><text x="469.7" y="1685.7" font-size="28.5" text-anchor="middle" fill="#d4d4de" font-family="Liberation Sans" letter-spacing="-0.9" stroke="#d4d4de" stroke-width="0.4">09:45</text><line x1="605.9" y1="1080" x2="605.9" y2="1648" stroke="#252528" stroke-width="2"/><text x="605.9" y="1685.7" font-size="28.5" text-anchor="middle" fill="#d4d4de" font-family="Liberation Sans" letter-spacing="-0.9" stroke="#d4d4de" stroke-width="0.4">10:00</text><line x1="742.1" y1="1080" x2="742.1" y2="1648" stroke="#252528" stroke-width="2"/><text x="742.1" y="1685.7" font-size="28.5" text-anchor="middle" fill="#d4d4de" font-family="Liberation Sans" letter-spacing="-0.9" stroke="#d4d4de" stroke-width="0.4">10:15</text><line x1="878.3" y1="1080" x2="878.3" y2="1648" stroke="#252528" stroke-width="2"/><text x="878.3" y="1685.7" font-size="28.5" text-anchor="middle" fill="#d4d4de" font-family="Liberation Sans" letter-spacing="-0.9" stroke="#d4d4de" stroke-width="0.4">10:30</text><line x1="1014.5" y1="1080" x2="1014.5" y2="1648" stroke="#252528" stroke-width="2"/><text x="1014.5" y="1685.7" font-size="28.5" text-anchor="middle" fill="#d4d4de" font-family="Liberation Sans" letter-spacing="-0.9" stroke="#d4d4de" stroke-width="0.4">10:45</text><line x1="1150.7" y1="1080" x2="1150.7" y2="1648" stroke="#252528" stroke-width="2"/><text x="1150.7" y="1685.7" font-size="28.5" text-anchor="middle" fill="#d4d4de" font-family="Liberation Sans" letter-spacing="-0.9" stroke="#d4d4de" stroke-width="0.4">11:00</text><line x1="1286.9" y1="1080" x2="1286.9" y2="1648" stroke="#252528" stroke-width="2"/><text x="1286.9" y="1685.7" font-size="28.5" text-anchor="middle" fill="#d4d4de" font-family="Liberation Sans" letter-spacing="-0.9" stroke="#d4d4de" stroke-width="0.4">11:15</text><line x1="1423.1" y1="1080" x2="1423.1" y2="1648" stroke="#252528" stroke-width="2"/><text x="1423.1" y="1685.7" font-size="28.5" text-anchor="middle" fill="#d4d4de" font-family="Liberation Sans" letter-spacing="-0.9" stroke="#d4d4de" stroke-width="0.4">11:30</text><line x1="1559.3" y1="1080" x2="1559.3" y2="1648" stroke="#252528" stroke-width="2"/><text x="1559.3" y="1685.7" font-size="28.5" text-anchor="middle" fill="#d4d4de" font-family="Liberation Sans" letter-spacing="-0.9" stroke="#d4d4de" stroke-width="0.4">11:45</text><line x1="1695.5" y1="1080" x2="1695.5" y2="1648" stroke="#252528" stroke-width="2"/><text x="1695.5" y="1685.7" font-size="28.5" text-anchor="middle" fill="#d4d4de" font-family="Liberation Sans" letter-spacing="-0.9" stroke="#d4d4de" stroke-width="0.4">12:00</text><line x1="1831.7" y1="1080" x2="1831.7" y2="1648" stroke="#252528" stroke-width="2"/><text x="1831.7" y="1685.7" font-size="28.5" text-anchor="middle" fill="#d4d4de" font-family="Liberation Sans" letter-spacing="-0.9" stroke="#d4d4de" stroke-width="0.4">12:15</text><line x1="1967.9" y1="1080" x2="1967.9" y2="1648" stroke="#252528" stroke-width="2"/><text x="1967.9" y="1685.7" font-size="28.5" text-anchor="middle" fill="#d4d4de" font-family="Liberation Sans" letter-spacing="-0.9" stroke="#d4d4de" stroke-width="0.4">12:30</text><line x1="2104.1" y1="1080" x2="2104.1" y2="1648" stroke="#252528" stroke-width="2"/><text x="2104.1" y="1685.7" font-size="28.5" text-anchor="middle" fill="#d4d4de" font-family="Liberation Sans" letter-spacing="-0.9" stroke="#d4d4de" stroke-width="0.4">12:45</text><line x1="2240.3" y1="1080" x2="2240.3" y2="1648" stroke="#252528" stroke-width="2"/><text x="2240.3" y="1685.7" font-size="28.5" text-anchor="middle" fill="#d4d4de" font-family="Liberation Sans" letter-spacing="-0.9" stroke="#d4d4de" stroke-width="0.4">13:00</text><line x1="2376.5" y1="1080" x2="2376.5" y2="1648" stroke="#252528" stroke-width="2"/><text x="2376.5" y="1685.7" font-size="28.5" text-anchor="middle" fill="#d4d4de" font-family="Liberation Sans" letter-spacing="-0.9" stroke="#d4d4de" stroke-width="0.4">13:15</text><line x1="2512.7" y1="1080" x2="2512.7" y2="1648" stroke="#252528" stroke-width="2"/><text x="2512.7" y="1685.7" font-size="28.5" text-anchor="middle" fill="#d4d4de" font-family="Liberation Sans" letter-spacing="-0.9" stroke="#d4d4de" stroke-width="0.4">13:30</text><line x1="2648.9" y1="1080" x2="2648.9" y2="1648" stroke="#252528" stroke-width="2"/><text x="2648.9" y="1685.7" font-size="28.5" text-anchor="middle" fill="#d4d4de" font-family="Liberation Sans" letter-spacing="-0.9" stroke="#d4d4de" stroke-width="0.4">13:45</text><line x1="2785.1" y1="1080" x2="2785.1" y2="1648" stroke="#252528" stroke-width="2"/><text x="2785.1" y="1685.7" font-size="28.5" text-anchor="middle" fill="#d4d4de" font-family="Liberation Sans" letter-spacing="-0.9" stroke="#d4d4de" stroke-width="0.4">14:00</text><line x1="2921.3" y1="1080" x2="2921.3" y2="1648" stroke="#252528" stroke-width="2"/><text x="2921.3" y="1685.7" font-size="28.5" text-anchor="middle" fill="#d4d4de" font-family="Liberation Sans" letter-spacing="-0.9" stroke="#d4d4de" stroke-width="0.4">14:15</text><line x1="3057.5" y1="1080" x2="3057.5" y2="1648" stroke="#252528" stroke-width="2"/><text x="3057.5" y="1685.7" font-size="28.5" text-anchor="middle" fill="#d4d4de" font-family="Liberation Sans" letter-spacing="-0.9" stroke="#d4d4de" stroke-width="0.4">14:30</text><line x1="3193.7" y1="1080" x2="3193.7" y2="1648" stroke="#252528" stroke-width="2"/><text x="3193.7" y="1685.7" font-size="28.5" text-anchor="middle" fill="#d4d4de" font-family="Liberation Sans" letter-spacing="-0.9" stroke="#d4d4de" stroke-width="0.4">14:45</text><line x1="3329.9" y1="1080" x2="3329.9" y2="1648" stroke="#252528" stroke-width="2"/><text x="3329.9" y="1685.7" font-size="28.5" text-anchor="middle" fill="#d4d4de" font-family="Liberation Sans" letter-spacing="-0.9" stroke="#d4d4de" stroke-width="0.4">15:00</text><polyline points="261.5,1131.6 607.4,1389.2 806.3,1389.2 1152.2,1406.4 1351.1,1389.2 1697.0,1423.6 1895.9,1389.2 2241.8,1440.7 2440.7,1595.3 2786.6,1457.9 2985.5,1595.3 3331.4,1457.9" fill="none" stroke="#84bc71" stroke-width="2.2" stroke-linejoin="round"/><circle cx="261.5" cy="1131.6" r="5.8" fill="#84bc71"/><circle cx="607.4" cy="1389.2" r="5.8" fill="#84bc71"/><circle cx="806.3" cy="1389.2" r="5.8" fill="#84bc71"/><circle cx="1152.2" cy="1406.4" r="5.8" fill="#84bc71"/><circle cx="1351.1" cy="1389.2" r="5.8" fill="#84bc71"/><circle cx="1697.0" cy="1423.6" r="5.8" fill="#84bc71"/><circle cx="1895.9" cy="1389.2" r="5.8" fill="#84bc71"/><circle cx="2241.8" cy="1440.7" r="5.8" fill="#84bc71"/><circle cx="2440.7" cy="1595.3" r="5.8" fill="#84bc71"/><circle cx="2786.6" cy="1457.9" r="5.8" fill="#84bc71"/><circle cx="2985.5" cy="1595.3" r="5.8" fill="#84bc71"/><circle cx="3331.4" cy="1457.9" r="5.8" fill="#84bc71"/></svg>
</body></html>
